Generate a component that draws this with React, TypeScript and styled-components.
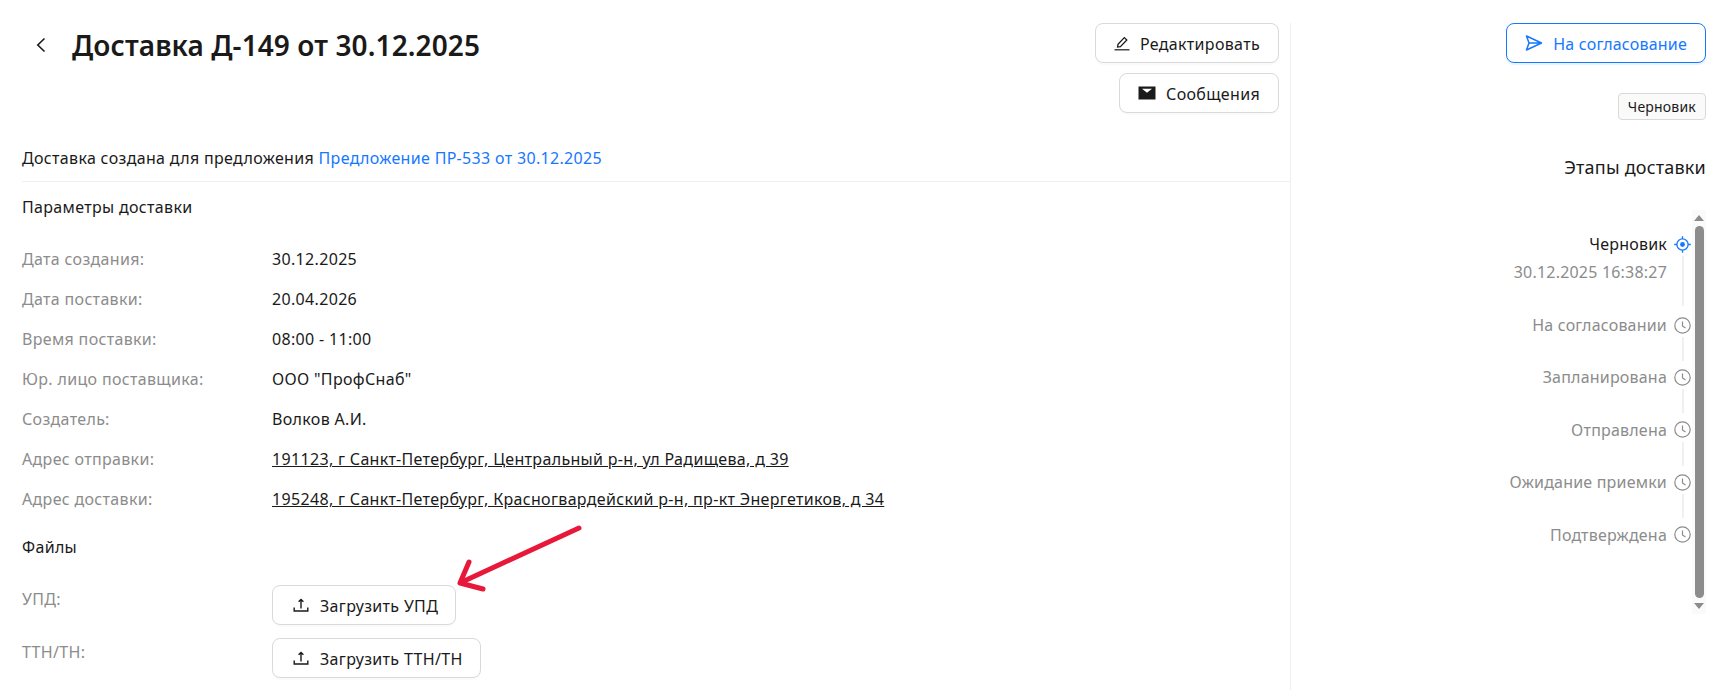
import * as React from "react";
import styled, {createGlobalStyle} from "styled-components";

const GlobalStyle = createGlobalStyle`
    html, body {
        margin: 0;
        padding: 0;
        background: #fff;
    }
    body {
        font-family: "Noto Sans", "Open Sans", sans-serif;
        font-size: 16px;
        letter-spacing: 0.2px;
        color: #1a1a1a;
    }
`;

const Page = styled.div`
    position: relative;
    display: grid;
    grid-template-columns: 1291px 1fr;
    width: 1723px;
    height: 690px;
    overflow: hidden;
    box-sizing: border-box;
    padding-top: 23px;
`;

const Main = styled.main`
    border-right: 1px solid #f0f0f0;
    padding-left: 22px;
    letter-spacing: 0.33px;
`;

const Header = styled.div`
    display: flex;
    justify-content: space-between;
    align-items: flex-start;
    height: 120px;
    padding-right: 11px;
`;

const TitleRow = styled.div`
    display: flex;
    align-items: center;
    height: 44px;
    padding-left: 13px;
`;

const Back = styled.span`
    display: flex;
    width: 37px;
    color: #1a1a1a;
`;

const Title = styled.h1`
    margin: 0;
    font-size: 28px;
    font-weight: 600;
    letter-spacing: 0.1px;
    line-height: 42px;
    color: #1a1a1a;
`;

const HeaderActions = styled.div`
    display: flex;
    flex-direction: column;
    align-items: flex-end;
    gap: 10px;
`;

const Button = styled.button<{$primary?: boolean}>`
    display: inline-flex;
    align-items: center;
    gap: 10px;
    height: 40px;
    padding: 2px 18px 0;
    box-sizing: border-box;
    background: #fff;
    border: 1px solid ${({$primary}) => ($primary ? "#1677ff" : "#d9d9d9")};
    border-radius: 8px;
    box-shadow: 0 2px 0 ${({$primary}) => ($primary ? "rgba(5, 145, 255, 0.1)" : "rgba(0, 0, 0, 0.02)")};
    color: ${({$primary}) => ($primary ? "#1677ff" : "#1a1a1a")};
    font: inherit;
    letter-spacing: inherit;
    white-space: nowrap;

    svg {
        margin-top: -2px;
    }
`;

const UploadButton = styled(Button)`
    gap: 11px;
    padding-left: 20px;
    padding-right: 17px;
`;

const Origin = styled.div`
    height: 38px;
    line-height: 30px;
    border-bottom: 1px solid #f0f0f0;
`;

const OriginLink = styled.a`
    color: #1677ff;
    text-decoration: none;
`;

const SectionTitle = styled.div`
    height: 57px;
    line-height: 50px;
`;

const Rows = styled.div`
    display: grid;
    grid-template-columns: 250px 1fr;
    grid-auto-rows: 40px;
    align-items: center;
    margin-bottom: 8px;
`;

const Label = styled.div`
    color: #8c8c8c;
`;

const Address = styled.a`
    color: #1a1a1a;
    text-decoration: underline;
`;

const FilesTitle = styled.div`
    height: 40px;
    line-height: 40px;
`;

const FileRows = styled.div`
    display: grid;
    grid-template-columns: 250px 1fr;
    row-gap: 13px;
    margin-top: 18px;
`;

const FileLabel = styled(Label)`
    padding-top: 3px;
`;

const FileCell = styled.div`
    display: flex;
`;

const Aside = styled.aside`
    display: flex;
    flex-direction: column;
    align-items: flex-end;
    padding-right: 17px;
`;

const Tag = styled.span`
    display: inline-flex;
    align-items: center;
    height: 27px;
    margin-top: 30px;
    padding: 0 9px;
    box-sizing: border-box;
    border: 1px solid #d9d9d9;
    border-radius: 4px;
    background: #fafafa;
    font-size: 14px;
`;

const StagesTitle = styled.h2`
    margin: 32px 0 0;
    font-size: 18px;
    font-weight: 400;
    line-height: 30px;
`;

const StagesPanel = styled.div`
    display: flex;
    justify-content: flex-end;
    gap: 1px;
    width: 100%;
    height: 404px;
    margin-top: 28px;
`;

const Timeline = styled.ol`
    margin: 0;
    padding: 22px 0 0;
    list-style: none;
`;

const Stage = styled.li<{$tall?: boolean}>`
    display: grid;
    grid-template-columns: 1fr 17px;
    column-gap: 7px;
    align-content: start;
    height: ${({$tall}) => ($tall ? "81px" : "52.4px")};
    color: ${({$tall}) => ($tall ? "#1a1a1a" : "#8c8c8c")};
    text-align: right;
`;

const StageName = styled.div`
    line-height: 24px;
`;

const StageDate = styled.div`
    grid-column: 1;
    color: #8c8c8c;
    line-height: 32px;
`;

const StageDot = styled.div<{$active?: boolean}>`
    position: relative;
    display: flex;
    height: 24px;
    align-items: center;
    color: ${({$active}) => ($active ? "#1677ff" : "#8c8c8c")};
`;

const Connector = styled.span<{$height: number}>`
    position: absolute;
    top: 24px;
    left: 8px;
    width: 2px;
    height: ${({$height}) => $height}px;
    background: #f0f0f0;
`;

const ScrollTrack = styled.div`
    display: flex;
    flex-direction: column;
    align-items: center;
    width: 14px;
    background: #fafafa;
    color: #8c8c8c;
`;

const ScrollArrow = styled.svg`
    flex: none;
    display: block;
    margin: 5px 0;
`;

const ScrollThumb = styled.div`
    flex: 1;
    width: 9px;
    border-radius: 5px;
    background: #8c8c8c;
`;

const Annotation = styled.svg`
    position: absolute;
    left: 450px;
    top: 520px;
    pointer-events: none;
`;

const ChevronIcon = () => (
    <svg width="13" height="16" viewBox="0 0 13 16" fill="none" stroke="currentColor" strokeWidth="1.6">
        <path d="M9.5 1.5 L2.8 8 L9.5 14.5" />
    </svg>
);

const EditIcon = () => (
    <svg width="16" height="16" viewBox="0 0 16 16" fill="none" stroke="currentColor">
        <path strokeWidth="1.3" d="M3.6 12 L4 9.2 L10.3 2.6 L12.8 5 L6.4 11.6 Z" />
        <path strokeWidth="1.2" d="M0.5 14.8 H15.5" />
    </svg>
);

const MailIcon = () => (
    <svg width="18" height="16" viewBox="0 0 18 16">
        <path fill="currentColor" d="M0.5 1.5 H17.5 V14.5 H0.5 Z" />
        <path fill="#fff" d="M4 3.8 H14 L9 7.8 Z" />
    </svg>
);

const SendIcon = () => (
    <svg width="18" height="18" viewBox="0 0 18 18" fill="none" stroke="currentColor" strokeWidth="1.5" strokeLinejoin="round">
        <path d="M1.5 2 L16.5 9 L1.5 16 L4 9 Z M4 9 H16" />
    </svg>
);

const UploadIcon = () => (
    <svg width="16" height="16" viewBox="0 0 16 16" fill="none" stroke="currentColor" strokeWidth="1.4">
        <path d="M1.2 10.5 V14 H14.8 V10.5" />
        <path d="M8 11.5 V2.5 M5.6 4.8 L8 2.5 L10.4 4.8" />
    </svg>
);

const ClockIcon = () => (
    <svg width="17" height="17" viewBox="0 0 17 17" fill="none" stroke="currentColor" strokeWidth="1.2">
        <circle cx="8.5" cy="8.5" r="7.7" />
        <path d="M8.5 4.5 V9 L11.5 11" />
    </svg>
);

const TargetIcon = () => (
    <svg width="17" height="17" viewBox="0 0 17 17" fill="none" stroke="currentColor" strokeWidth="1.3">
        <circle cx="8.5" cy="8.5" r="5.6" />
        <circle cx="8.5" cy="8.5" r="2.4" fill="currentColor" stroke="none" />
        <path d="M8.5 0.2 V3 M8.5 14 V16.8 M0.2 8.5 H3 M14 8.5 H16.8" />
    </svg>
);

const params: {label: string; value: string; address?: boolean}[] = [
    {label: "Дата создания:", value: "30.12.2025"},
    {label: "Дата поставки:", value: "20.04.2026"},
    {label: "Время поставки:", value: "08:00 - 11:00"},
    {label: "Юр. лицо поставщика:", value: "ООО \"ПрофСнаб\""},
    {label: "Создатель:", value: "Волков А.И."},
    {label: "Адрес отправки:", value: "191123, г Санкт-Петербург, Центральный р-н, ул Радищева, д 39", address: true},
    {label: "Адрес доставки:", value: "195248, г Санкт-Петербург, Красногвардейский р-н, пр-кт Энергетиков, д 34", address: true},
];

const stages = ["На согласовании", "Запланирована", "Отправлена", "Ожидание приемки", "Подтверждена"];

const App: React.FC = (): JSX.Element => {
    return (
        <Page>
            <GlobalStyle />
            <Main>
                <Header>
                    <TitleRow>
                        <Back><ChevronIcon /></Back>
                        <Title>Доставка Д-149 от 30.12.2025</Title>
                    </TitleRow>
                    <HeaderActions>
                        <Button><EditIcon />Редактировать</Button>
                        <Button><MailIcon />Сообщения</Button>
                    </HeaderActions>
                </Header>
                <Origin>
                    Доставка создана для предложения <OriginLink>Предложение ПР-533 от 30.12.2025</OriginLink>
                </Origin>
                <SectionTitle>Параметры доставки</SectionTitle>
                <Rows>
                    {params.map(({label, value, address}) => (
                        <React.Fragment key={label}>
                            <Label>{label}</Label>
                            {address ? <div><Address>{value}</Address></div> : <div>{value}</div>}
                        </React.Fragment>
                    ))}
                </Rows>
                <FilesTitle>Файлы</FilesTitle>
                <FileRows>
                    <FileLabel>УПД:</FileLabel>
                    <FileCell><UploadButton><UploadIcon />Загрузить УПД</UploadButton></FileCell>
                    <FileLabel>ТТН/ТН:</FileLabel>
                    <FileCell><UploadButton><UploadIcon />Загрузить ТТН/ТН</UploadButton></FileCell>
                </FileRows>
            </Main>
            <Aside>
                <Button $primary><SendIcon />На согласование</Button>
                <Tag>Черновик</Tag>
                <StagesTitle>Этапы доставки</StagesTitle>
                <StagesPanel>
                    <Timeline>
                        <Stage $tall>
                            <StageName>Черновик</StageName>
                            <StageDot $active><TargetIcon /><Connector $height={50} /></StageDot>
                            <StageDate>30.12.2025 16:38:27</StageDate>
                        </Stage>
                        {stages.map((stage, index) => (
                            <Stage key={stage}>
                                <StageName>{stage}</StageName>
                                <StageDot>
                                    <ClockIcon />
                                    {index < stages.length - 1 && <Connector $height={24} />}
                                </StageDot>
                            </Stage>
                        ))}
                    </Timeline>
                    <ScrollTrack>
                        <ScrollArrow width="10" height="6" viewBox="0 0 10 6"><path fill="currentColor" d="M5 0 L10 6 H0 Z" /></ScrollArrow>
                        <ScrollThumb />
                        <ScrollArrow width="10" height="6" viewBox="0 0 10 6"><path fill="currentColor" d="M0 0 H10 L5 6 Z" /></ScrollArrow>
                    </ScrollTrack>
                </StagesPanel>
            </Aside>
            <Annotation width="140" height="80" viewBox="0 0 140 80" fill="none" stroke="#e8183a" strokeWidth="5" strokeLinecap="round" strokeLinejoin="round">
                <path d="M129 8 L12 62" />
                <path d="M19 42 L10 63 L33 69" />
            </Annotation>
        </Page>
    );
};

export default App;
